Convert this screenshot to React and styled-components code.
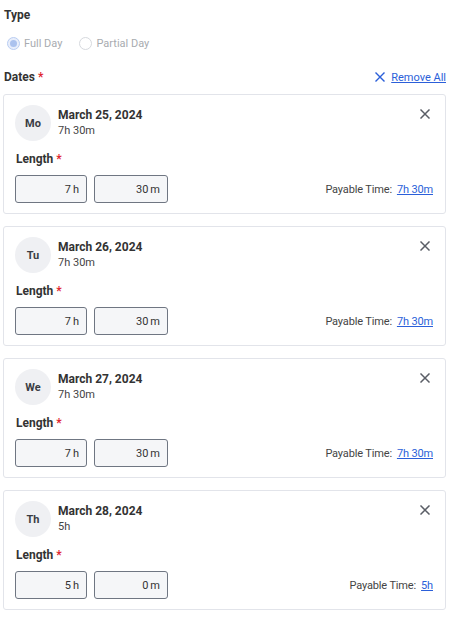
import React from 'react';
import styled, { createGlobalStyle } from 'styled-components';

const GlobalStyle = createGlobalStyle`
  body {
    margin: 0;
    background: #fff;
    font-family: Roboto, "Liberation Sans", Arial, sans-serif;
    color: #333;
  }
`;

const Page = styled.div`
  width: 443px;
  padding: 7px 0 10px 3px;
`;

const Label = styled.div`
  font-size: 12px;
  font-weight: 700;
  line-height: 16px;
  color: #333;
  padding-left: 1px;
`;

const Required = styled.span`
  color: #e0262f;
  margin-left: 3px;
`;

const RadioRow = styled.div`
  display: flex;
  align-items: center;
  gap: 17px;
  height: 20px;
  margin-top: 10px;
  padding-left: 4px;
`;

const RadioItem = styled.label`
  display: flex;
  align-items: center;
  gap: 4px;
  font-size: 11px;
  color: #a8abb0;
`;

const RadioCircle = styled.span`
  box-sizing: border-box;
  width: 13px;
  height: 13px;
  border-radius: 50%;
  border: 1px solid ${p => (p.checked ? '#b9cdf2' : '#d6d9de')};
  background: ${p => (p.checked ? '#e8eefb' : '#fff')};
  display: flex;
  align-items: center;
  justify-content: center;
  &::after {
    content: '';
    display: ${p => (p.checked ? 'block' : 'none')};
    width: 7px;
    height: 7px;
    border-radius: 50%;
    background: #abc2ee;
  }
`;

const DatesHeader = styled.div`
  display: flex;
  align-items: center;
  justify-content: space-between;
  height: 20px;
  margin-top: 14px;
`;

const RemoveAll = styled.a`
  display: flex;
  align-items: center;
  gap: 6px;
  font-size: 11px;
  color: #2b5fd9;
  cursor: pointer;
  span {
    text-decoration: underline;
  }
`;

const CardList = styled.div`
  display: flex;
  flex-direction: column;
  gap: 12px;
  margin-top: 7px;
`;

const Card = styled.div`
  border: 1px solid #e2e4ea;
  border-radius: 3px;
  padding: 10px 12px 10px 11px;
  background: #fff;
`;

const CardHeader = styled.div`
  display: flex;
  align-items: center;
  gap: 7px;
  height: 36px;
`;

const Avatar = styled.div`
  width: 36px;
  height: 36px;
  border-radius: 50%;
  background: #eff0f3;
  display: flex;
  align-items: center;
  justify-content: center;
  font-size: 11px;
  font-weight: 700;
  color: #3a3d44;
`;

const HeaderText = styled.div`
  flex: 1;
  display: flex;
  flex-direction: column;
`;

const Title = styled.div`
  font-size: 12px;
  font-weight: 700;
  line-height: 16px;
  color: #333;
`;

const Sub = styled.div`
  font-size: 11px;
  line-height: 16px;
  color: #444;
`;

const CloseBtn = styled.button`
  align-self: flex-start;
  margin-top: 1px;
  border: 0;
  background: none;
  padding: 2px;
  width: 16px;
  height: 16px;
  display: flex;
  align-items: center;
  justify-content: center;
  cursor: pointer;
`;

const LengthLabel = styled(Label)`
  margin-top: 10px;
  padding-left: 1px;
`;

const InputRow = styled.div`
  display: flex;
  align-items: center;
  gap: 7px;
  margin-top: 8px;
`;

const Field = styled.div`
  box-sizing: border-box;
  width: ${p => p.w}px;
  height: 28px;
  border: 1px solid #6f7682;
  border-radius: 3px;
  background: #f5f6f8;
  display: flex;
  align-items: center;
  justify-content: flex-end;
  padding-right: 7px;
  font-size: 11px;
  color: #333;
`;

const Unit = styled.span`
  margin-left: 2px;
`;

const Payable = styled.div`
  margin-left: auto;
  font-size: 11px;
  letter-spacing: -0.15px;
  color: #444;
  a {
    color: #2b5fd9;
    text-decoration: underline;
    margin-left: 5px;
  }
`;

const XIcon = ({ size = 10, color = '#555', width = 1.5 }) => (
  <svg width={size} height={size} viewBox="0 0 10 10">
    <path d="M1 1L9 9M9 1L1 9" stroke={color} strokeWidth={width} strokeLinecap="square" />
  </svg>
);

const days = [
  { abbr: 'Mo', date: 'March 25, 2024', h: 7, m: 30, total: '7h 30m' },
  { abbr: 'Tu', date: 'March 26, 2024', h: 7, m: 30, total: '7h 30m' },
  { abbr: 'We', date: 'March 27, 2024', h: 7, m: 30, total: '7h 30m' },
  { abbr: 'Th', date: 'March 28, 2024', h: 5, m: 0, total: '5h' },
];

const App = () => (
  <>
    <GlobalStyle />
    <Page>
      <Label>Type</Label>
      <RadioRow>
        <RadioItem>
          <RadioCircle checked />
          Full Day
        </RadioItem>
        <RadioItem>
          <RadioCircle />
          Partial Day
        </RadioItem>
      </RadioRow>
      <DatesHeader>
        <Label>
          Dates<Required>*</Required>
        </Label>
        <RemoveAll>
          <XIcon size={10} color="#2b5fd9" width={1.4} />
          <span>Remove All</span>
        </RemoveAll>
      </DatesHeader>
      <CardList>
        {days.map(d => (
          <Card key={d.abbr}>
            <CardHeader>
              <Avatar>{d.abbr}</Avatar>
              <HeaderText>
                <Title>{d.date}</Title>
                <Sub>{d.total}</Sub>
              </HeaderText>
              <CloseBtn>
                <XIcon size={10} color="#5a5e66" width={1.5} />
              </CloseBtn>
            </CardHeader>
            <LengthLabel>
              Length<Required>*</Required>
            </LengthLabel>
            <InputRow>
              <Field w={72}>
                {d.h}
                <Unit>h</Unit>
              </Field>
              <Field w={74}>
                {d.m}
                <Unit>m</Unit>
              </Field>
              <Payable>
                Payable Time:<a>{d.total}</a>
              </Payable>
            </InputRow>
          </Card>
        ))}
      </CardList>
    </Page>
  </>
);

export default App;
